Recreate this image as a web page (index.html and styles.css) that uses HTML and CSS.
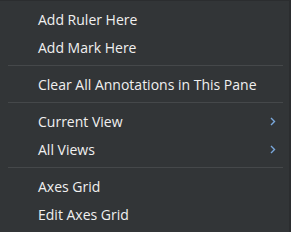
FILE: index.html
```html
<!DOCTYPE html>
<html lang="en">
<head>
  <meta charset="UTF-8">
  <title>Context Menu</title>
  <link rel="stylesheet" href="styles.css">
</head>
<body>
  <div class="menu">
    <div class="item">Add Ruler Here</div>
    <div class="item">Add Mark Here</div>
    <div class="sep"></div>
    <div class="item">Clear All Annotations in This Pane</div>
    <div class="sep"></div>
    <div class="item sub">Current View
      <svg class="arrow" width="6" height="9" viewBox="0 0 6 9"><path d="M1 1 L4.5 4.5 L1 8" fill="none" stroke="#7aa8dc" stroke-width="1.4"/></svg>
    </div>
    <div class="item sub">All Views
      <svg class="arrow" width="6" height="9" viewBox="0 0 6 9"><path d="M1 1 L4.5 4.5 L1 8" fill="none" stroke="#7aa8dc" stroke-width="1.4"/></svg>
    </div>
    <div class="sep"></div>
    <div class="item">Axes Grid</div>
    <div class="item">Edit Axes Grid</div>
  </div>
</body>
</html>
```
FILE: styles.css
```css
:root {
  --menu-bg: #323537;
  --text-color: #f0f0f0;
  --sep-color: #45484a;
}

body {
  margin: 0;
  background: var(--menu-bg);
}

.menu {
  width: 291px;
  height: 232px;
  box-sizing: border-box;
  padding: 4px 0 5px;
  background: var(--menu-bg);
  border-top: 1px solid #2b2d2f;
  border-right: 2px solid #2b2d2f;
  font-family: "Open Sans", sans-serif;
  font-size: 14px;
  color: var(--text-color);
}

.item {
  height: 28px;
  display: flex;
  align-items: center;
  padding-left: 38px;
  padding-right: 13px;
}

.item.sub {
  justify-content: space-between;
}

.sep {
  height: 1px;
  margin: 4px 6px 4px 8px;
  background: var(--sep-color);
}
```
